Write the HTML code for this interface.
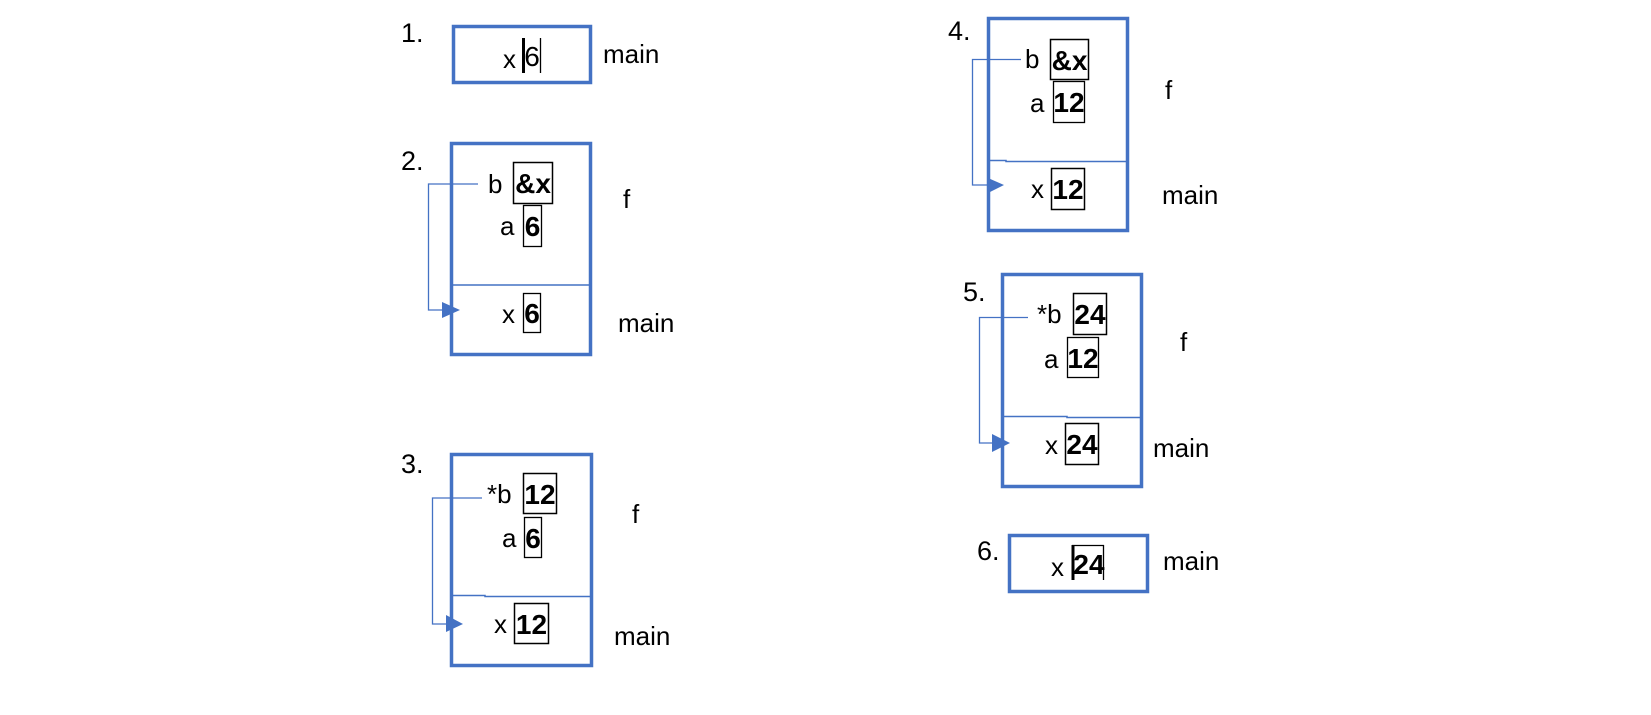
<!DOCTYPE html>
<html><head><meta charset="utf-8"><style>
html,body{margin:0;padding:0;background:#fff;}
svg{display:block;}
text{font-family:"Liberation Sans",sans-serif;fill:#000;}
.l{font-size:26px;}
.v{font-size:28px;font-weight:bold;}
.n{font-size:27px;}
</style></head><body>
<svg width="1651" height="715" viewBox="0 0 1651 715" xmlns="http://www.w3.org/2000/svg">
<g fill="none" stroke="#4472C4">
 <!-- frames -->
 <rect x="453.5" y="26.5" width="137" height="56" stroke-width="3.5"/>
 <rect x="451.5" y="143.5" width="139" height="211" stroke-width="3.5"/>
 <rect x="451.5" y="454.5" width="140" height="211" stroke-width="3.5"/>
 <rect x="988.5" y="18.5" width="139" height="212" stroke-width="3.5"/>
 <rect x="1002.5" y="274.5" width="139" height="212" stroke-width="3.5"/>
 <rect x="1009.5" y="535.5" width="138" height="56" stroke-width="3.5"/>
 <!-- dividers -->
 <path d="M452 285H590" stroke-width="1.5"/>
 <path d="M452 595.5H485V596.5H590" stroke-width="1.5"/>
 <path d="M989 160.5H1006V161.5H1127" stroke-width="1.5"/>
 <path d="M1003 416.5H1067V417.5H1140" stroke-width="1.5"/>
 <!-- arrows -->
 <path d="M478 184H428.5V310H445" stroke-width="1.3"/>
 <path d="M482 498H432.5V624H449" stroke-width="1.3"/>
 <path d="M1021 59.5H972.5V185H990" stroke-width="1.3"/>
 <path d="M1028 317.5H979.5V443H994" stroke-width="1.3"/>
</g>
<g fill="#4472C4">
 <path d="M442 302L460 310L442 318Z"/>
 <path d="M446 615L463 624L446 632Z"/>
 <path d="M988 178L1004 185L988 193Z"/>
 <path d="M992 434L1010 443L992 452Z"/>
</g>
<!-- value boxes -->
<g fill="none" stroke="#000">
 <path d="M523.5 38V73" stroke-width="3"/><path d="M540.5 38V73" stroke-width="1.3"/>
 <rect x="513.5" y="162.5" width="39" height="41" stroke-width="1.5"/>
 <rect x="523.5" y="205.5" width="18" height="41" stroke-width="1.3"/>
 <rect x="523.5" y="293.5" width="17" height="39" stroke-width="1.3"/>
 <rect x="523.5" y="473.5" width="33" height="40" stroke-width="1.5"/>
 <rect x="524.5" y="517.5" width="17" height="40" stroke-width="1.3"/>
 <rect x="514.5" y="603.5" width="34" height="40" stroke-width="1.5"/>
 <rect x="1050.5" y="39.5" width="38" height="40" stroke-width="1.5"/>
 <rect x="1053.5" y="81.5" width="31" height="41" stroke-width="1.3"/>
 <rect x="1051.5" y="168.5" width="33" height="41" stroke-width="1.5"/>
 <rect x="1073.5" y="293.5" width="33" height="41" stroke-width="1.5"/>
 <rect x="1067.5" y="337.5" width="31" height="40" stroke-width="1.3"/>
 <rect x="1065.5" y="423.5" width="33" height="41" stroke-width="1.5"/>
 <path d="M1073 545V580" stroke-width="3"/><path d="M1072 545.5H1104" stroke-width="1.3"/><path d="M1103.5 545V580" stroke-width="1.3"/>
</g>
<!-- numbers -->
<text class="n" x="401" y="42">1.</text>
<text class="n" x="401" y="170">2.</text>
<text class="n" x="401" y="473">3.</text>
<text class="n" x="948" y="40">4.</text>
<text class="n" x="963" y="301">5.</text>
<text class="n" x="977" y="560">6.</text>
<!-- labels -->
<text class="l" x="503" y="68">x</text>
<text class="l" x="603" y="63">main</text>
<text class="l" x="488" y="193">b</text>
<text class="l" x="500" y="235">a</text>
<text class="l" x="502" y="323">x</text>
<text class="l" x="623" y="208">f</text>
<text class="l" x="618" y="332">main</text>
<text class="l" x="487" y="503">*b</text>
<text class="l" x="502" y="547">a</text>
<text class="l" x="494" y="633">x</text>
<text class="l" x="632" y="523">f</text>
<text class="l" x="614" y="645">main</text>
<text class="l" x="1025" y="68">b</text>
<text class="l" x="1030" y="112">a</text>
<text class="l" x="1031" y="198">x</text>
<text class="l" x="1165" y="99">f</text>
<text class="l" x="1162" y="204">main</text>
<text class="l" x="1037" y="323">*b</text>
<text class="l" x="1044" y="368">a</text>
<text class="l" x="1045" y="454">x</text>
<text class="l" x="1180" y="351">f</text>
<text class="l" x="1153" y="457">main</text>
<text class="l" x="1051" y="576">x</text>
<text class="l" x="1163" y="570">main</text>
<!-- values -->
<g text-anchor="middle">
<text class="l" x="532" y="66" style="font-size:28px">6</text>
<text class="v" x="533" y="193">&amp;x</text>
<text class="v" x="532.5" y="236">6</text>
<text class="v" x="532" y="323">6</text>
<text class="v" x="540" y="504">12</text>
<text class="v" x="533" y="548">6</text>
<text class="v" x="531.5" y="634">12</text>
<text class="v" x="1069.5" y="70">&amp;x</text>
<text class="v" x="1069" y="112">12</text>
<text class="v" x="1068" y="199">12</text>
<text class="v" x="1090" y="324">24</text>
<text class="v" x="1083" y="368">12</text>
<text class="v" x="1082" y="454">24</text>
<text class="v" x="1089" y="574">24</text>
</g>
</svg>
</body></html>
